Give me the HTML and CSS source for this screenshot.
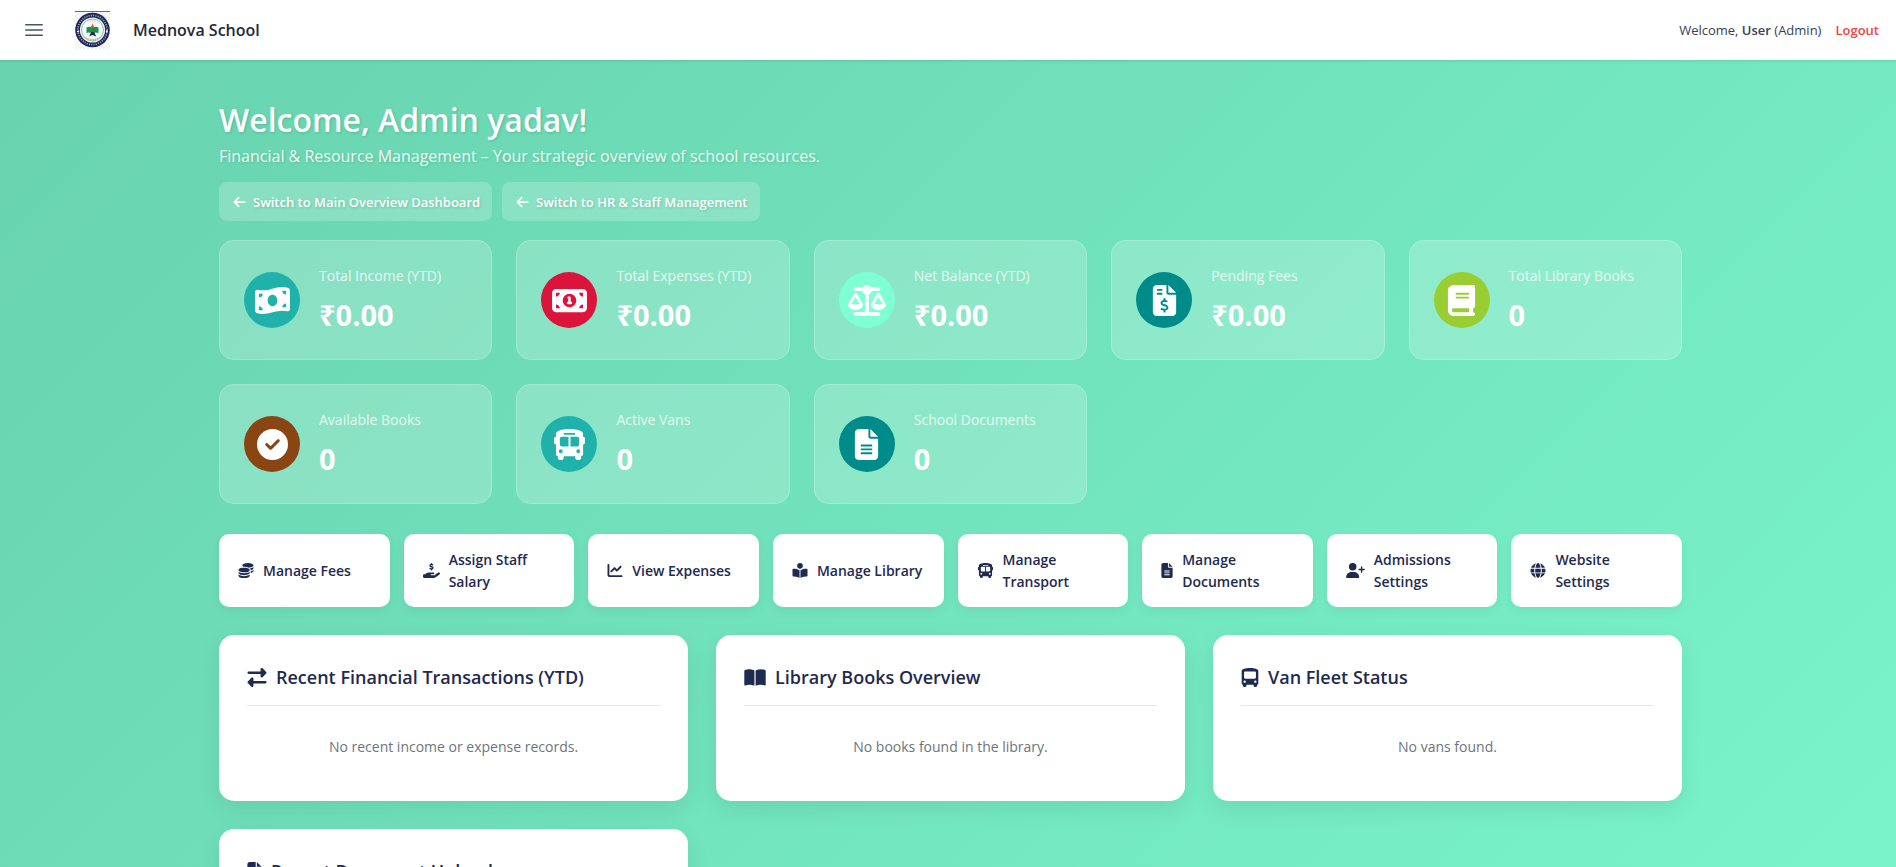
FILE: index.html
```html
<!DOCTYPE html>
<html lang="en">
<head>
<meta charset="utf-8">
<meta name="viewport" content="width=device-width, initial-scale=1">
<title>Mednova School</title>
<link rel="stylesheet" href="styles.css">
</head>
<body>
<svg class="sprite" aria-hidden="true">
  <symbol id="arrow-left" viewBox="0 0 448 512"><path d="M9.4 233.4c-12.5 12.5-12.5 32.8 0 45.3l160 160c12.5 12.5 32.8 12.5 45.3 0s12.5-32.8 0-45.3L109.2 288 416 288c17.7 0 32-14.3 32-32s-14.3-32-32-32l-306.7 0L214.6 118.6c12.5-12.5 12.5-32.8 0-45.3s-32.8-12.5-45.3 0l-160 160z"/></symbol>
  <symbol id="bill-wave" viewBox="0 0 576 512"><path fill-rule="evenodd" d="M0 112.5V422.3c0 18 10.1 35 27 41.3c87 32.5 174 10.3 261-11.9c79.8-20.3 159.6-40.7 239.3-18.9c23 6.3 48.7-9.5 48.7-33.4V89.7c0-18-10.1-35-27-41.3C462 15.9 375 38.1 288 60.3C208.2 80.6 128.4 100.9 48.7 79.1C25.6 72.8 0 88.6 0 112.5zM288 352c-44.2 0-80-43-80-96s35.8-96 80-96s80 43 80 96s-35.8 96-80 96zM64 352c35.3 0 64 28.7 64 64H64V352zm64-208c0 35.3-28.7 64-64 64V144h64zM512 304v64H448c0-35.3 28.7-64 64-64zM448 96h64v64c-35.3 0-64-28.7-64-64z"/></symbol>
  <symbol id="bill" viewBox="0 0 576 512"><path fill-rule="evenodd" d="M64 64C28.7 64 0 92.7 0 128V384c0 35.3 28.7 64 64 64H512c35.3 0 64-28.7 64-64V128c0-35.3-28.7-64-64-64H64zm64 320H64V320c35.3 0 64 28.7 64 64zM64 192V128h64c0 35.3-28.7 64-64 64zM448 384c0-35.3 28.7-64 64-64v64H448zm64-192c-35.3 0-64-28.7-64-64h64v64zM176 256a112 112 0 1 1 224 0 112 112 0 1 1 -224 0zm76-48c0 9.7 6.9 17.7 16 19.6V276h-4c-11 0-20 9-20 20s9 20 20 20h24 24c11 0 20-9 20-20s-9-20-20-20h-4V208c0-11-9-20-20-20H272c-11 0-20 9-20 20z"/></symbol>
  <symbol id="scale" viewBox="0 0 640 512"><path d="M384 32H512c17.7 0 32 14.3 32 32s-14.3 32-32 32H398.4c-5.2 25.8-22.9 47.1-46.4 57.3V448H512c17.7 0 32 14.3 32 32s-14.3 32-32 32H320 128c-17.7 0-32-14.3-32-32s14.3-32 32-32H288V153.3c-23.5-10.3-41.2-31.6-46.4-57.3H128c-17.7 0-32-14.3-32-32s14.3-32 32-32H256c14.6-19.4 37.8-32 64-32s49.4 12.6 64 32zm55.6 288H584.4L512 195.8 439.6 320zM512 416c-62.9 0-115.2-34-126-78.9c-2.6-11 1-22.3 6.7-32.1l95.2-163.2c5-8.6 14.2-13.8 24.1-13.8s19.1 5.3 24.1 13.8l95.2 163.2c5.7 9.8 9.3 21.1 6.7 32.1C627.2 382 574.9 416 512 416zM126.8 195.8L54.4 320H199.3L126.8 195.8zM.9 337.1c-2.6-11 1-22.3 6.7-32.1l95.2-163.2c5-8.6 14.2-13.8 24.1-13.8s19.1 5.3 24.1 13.8l95.2 163.2c5.7 9.8 9.3 21.1 6.7 32.1C242 382 189.7 416 126.8 416S11.7 382 .9 337.1z"/></symbol>
  <symbol id="invoice" viewBox="0 0 384 512"><path fill-rule="evenodd" d="M64 0C28.7 0 0 28.7 0 64V448c0 35.3 28.7 64 64 64H320c35.3 0 64-28.7 64-64V160H256c-17.7 0-32-14.3-32-32V0H64zM256 0V128H384L256 0zM64 80c0-8.8 7.2-16 16-16h64c8.8 0 16 7.2 16 16s-7.2 16-16 16H80c-8.8 0-16-7.2-16-16zm0 64c0-8.8 7.2-16 16-16h64c8.8 0 16 7.2 16 16s-7.2 16-16 16H80c-8.8 0-16-7.2-16-16zm128 72c8.8 0 16 7.2 16 16v17.3c8.5 1.2 16.7 3.1 24.1 5.1c8.5 2.3 13.6 11 11.3 19.6s-11 13.6-19.6 11.3c-11.1-3-22-5.2-32.1-5.3c-8.4-.1-17.4 1.8-23.6 5.5c-5.7 3.4-8.1 7.3-8.1 12.8c0 3.7 1.3 6.5 7.3 10.1c6.9 4.1 16.6 7.1 29.2 10.9l.5 .1c11.3 3.4 25.3 7.6 36.3 14.6c12.1 7.6 22.4 19.7 22.7 38.2c.3 19.3-9.6 33.3-22.9 41.6c-7.7 4.8-16.4 7.6-25.1 9.1V440c0 8.8-7.2 16-16 16s-16-7.2-16-16V422.2c-11.2-2.1-21.7-5.7-30.9-8.9c-2.1-.7-4.2-1.4-6.2-2.1c-8.4-2.8-12.9-11.9-10.1-20.2s11.9-12.9 20.2-10.1c2.5 .8 4.8 1.6 7.1 2.4c13.6 4.6 24.6 8.4 36.3 8.7c9.1 .3 17.9-1.7 23.7-5.3c5.1-3.2 7.9-7.3 7.8-14c-.1-4.6-1.8-7.8-7.7-11.6c-6.8-4.3-16.5-7.4-29-11.2l-1.6-.5c-11-3.3-24.3-7.3-34.8-13.7c-12-7.2-22.6-18.9-22.7-37.3c-.1-19.4 10.8-32.8 23.8-40.5c7.5-4.4 15.8-7.2 24.1-8.7V232c0-8.8 7.2-16 16-16z"/></symbol>
  <symbol id="book" viewBox="0 0 448 512"><path fill-rule="evenodd" d="M96 0C43 0 0 43 0 96V416c0 53 43 96 96 96H384h32c17.7 0 32-14.3 32-32s-14.3-32-32-32V384c17.7 0 32-14.3 32-32V32c0-17.7-14.3-32-32-32H384 96zm0 384H352v64H96c-17.7 0-32-14.3-32-32s14.3-32 32-32zm32-240c0-8.8 7.2-16 16-16H336c8.8 0 16 7.2 16 16s-7.2 16-16 16H144c-8.8 0-16-7.2-16-16zm16 48H336c8.8 0 16 7.2 16 16s-7.2 16-16 16H144c-8.8 0-16-7.2-16-16s7.2-16 16-16z"/></symbol>
  <symbol id="check" viewBox="0 0 512 512"><path fill-rule="evenodd" d="M256 512A256 256 0 1 0 256 0a256 256 0 1 0 0 512zM369 209L241 337c-9.4 9.4-24.6 9.4-33.9 0l-64-64c-9.4-9.4-9.4-24.6 0-33.9s24.6-9.4 33.9 0l47 47L335 175c9.4-9.4 24.6-9.4 33.9 0s9.4 24.6 0 33.9z"/></symbol>
  <symbol id="bus" viewBox="0 0 576 512"><path fill-rule="evenodd" d="M288 0C422.4 0 512 35.2 512 80V96l0 32c17.7 0 32 14.3 32 32v64c0 17.7-14.3 32-32 32l0 160c0 17.7-14.3 32-32 32v32c0 17.7-14.3 32-32 32H416c-17.7 0-32-14.3-32-32V448H192v32c0 17.7-14.3 32-32 32H128c-17.7 0-32-14.3-32-32l0-32c-17.7 0-32-14.3-32-32l0-160c-17.7 0-32-14.3-32-32V160c0-17.7 14.3-32 32-32h0V96h0V80C64 35.2 153.6 0 288 0zM128 160v96c0 17.7 14.3 32 32 32H272V128H160c-17.7 0-32 14.3-32 32zM304 288H416c17.7 0 32-14.3 32-32V160c0-17.7-14.3-32-32-32H304V288zM144 400a32 32 0 1 0 0-64 32 32 0 1 0 0 64zm288 0a32 32 0 1 0 0-64 32 32 0 1 0 0 64zM384 80c0-8.8-7.2-16-16-16H208c-8.8 0-16 7.2-16 16s7.2 16 16 16H368c8.8 0 16-7.2 16-16z"/></symbol>
  <symbol id="bus-simple" viewBox="0 0 448 512"><path fill-rule="evenodd" d="M224 0C348.8 0 448 35.2 448 80V96 416c0 17.7-14.3 32-32 32v32c0 17.7-14.3 32-32 32H352c-17.7 0-32-14.3-32-32V448H128v32c0 17.7-14.3 32-32 32H64c-17.7 0-32-14.3-32-32l0-32c-17.7 0-32-14.3-32-32V96 80C0 35.2 99.2 0 224 0zM64 128V256c0 17.7 14.3 32 32 32H352c17.7 0 32-14.3 32-32V128c0-17.7-14.3-32-32-32H96c-17.7 0-32 14.3-32 32zM80 400a32 32 0 1 0 0-64 32 32 0 1 0 0 64zm288 0a32 32 0 1 0 0-64 32 32 0 1 0 0 64z"/></symbol>
  <symbol id="file" viewBox="0 0 384 512"><path fill-rule="evenodd" d="M64 0C28.7 0 0 28.7 0 64V448c0 35.3 28.7 64 64 64H320c35.3 0 64-28.7 64-64V160H256c-17.7 0-32-14.3-32-32V0H64zM256 0V128H384L256 0zM112 256H272c8.8 0 16 7.2 16 16s-7.2 16-16 16H112c-8.8 0-16-7.2-16-16s7.2-16 16-16zm0 64H272c8.8 0 16 7.2 16 16s-7.2 16-16 16H112c-8.8 0-16-7.2-16-16s7.2-16 16-16zm0 64H272c8.8 0 16 7.2 16 16s-7.2 16-16 16H112c-8.8 0-16-7.2-16-16s7.2-16 16-16z"/></symbol>
  <symbol id="coins" viewBox="0 0 512 512"><path d="M512 80c0 18-14.3 34.6-38.4 48c-29.1 16.1-72.5 27.5-122.3 30.9c-3.7-1.8-7.4-3.5-11.3-5C300.6 137.4 248.2 128 192 128c-8.3 0-16.4 .2-24.5 .6l-1.1-.6C142.3 114.6 128 98 128 80c0-44.2 86-80 192-80S512 35.8 512 80zM160.7 161.1c10.2-.7 20.7-1.1 31.3-1.1c62.2 0 117.4 12.3 152.5 31.4C369.3 204.9 384 221.7 384 240c0 4-.7 7.9-2.1 11.7c-4.6 13.2-17 25.3-35 35.5c-.5 .3-1 .5-1.3 .7c-35 19.4-90.8 32-153.6 32c-59.6 0-112.9-11.3-148.2-29.1c-1.9-.9-3.7-1.9-5.5-2.9C14.3 274.6 0 258 0 240c0-34.8 53.4-64.5 128-75.4c10.5-1.5 21.4-2.7 32.7-3.5zM416 240c0-21.9-10.6-39.9-24.1-53.4c28.3-4.4 54.2-11.4 76.2-20.5c16.3-6.8 31.5-15.2 43.9-25.5V176c0 19.3-16.5 37.1-43.8 50.9c-14.6 7.4-32.4 13.7-52.4 18.5c.1-1.8 .2-3.5 .2-5.3zm-32 96c0 18-14.3 34.6-38.4 48c-1.8 1-3.6 1.9-5.5 2.9C304.9 404.7 251.6 416 192 416c-62.8 0-118.6-12.6-153.6-32C14.3 370.6 0 354 0 336V300.6c12.5 10.3 27.6 18.7 43.9 25.5C83.4 342.6 135.8 352 192 352s108.6-9.4 148.1-25.9c7.8-3.2 15.3-6.9 22.4-10.9c6.1-3.4 11.8-7.2 17.2-11.2c1.5-1.1 2.9-2.3 4.3-3.4V304v5.7V336zm32 0V304 278.1c19-4.2 36.5-9.5 52.1-16c16.3-6.8 31.5-15.2 43.9-25.5V272c0 10.5-5 21-14.9 30.9c-16.3 16.3-45 29.7-81.3 38.4c.1-1.7 .2-3.5 .2-5.3zM192 448c56.2 0 108.6-9.4 148.1-25.9c16.3-6.8 31.5-15.2 43.9-25.5V432c0 44.2-86 80-192 80S0 476.2 0 432V396.6c12.5 10.3 27.6 18.7 43.9 25.5C83.4 438.6 135.8 448 192 448z"/></symbol>
  <symbol id="hand" viewBox="0 0 576 512"><path d="M312 24V34.5c6.4 1.2 12.6 2.7 18.2 4.2c12.8 3.4 20.4 16.6 17 29.4s-16.6 20.4-29.4 17c-10.9-2.9-21.1-4.9-30.2-5c-7.3-.1-14.7 1.7-19.4 4.4c-2.1 1.3-3.1 2.4-3.5 3c-.3 .5-.7 1.2-.7 2.8c0 .3 0 .5 0 .6c.2 .2 .9 1.2 3.3 2.6c5.8 3.5 14.4 6.2 27.4 10.1l.9 .3c11.1 3.3 25.9 7.8 37.9 15.3c13.7 8.6 26.1 22.9 26.4 44.9c.3 22.5-11.4 38.9-26.7 48.5c-6.7 4.1-13.9 7-21.3 8.8V232c0 13.3-10.7 24-24 24s-24-10.7-24-24V220.6c-9.5-2.3-18.2-5.3-25.6-7.8c-2.1-.7-4.1-1.4-6-2c-12.6-4.2-19.4-17.8-15.2-30.4s17.8-19.4 30.4-15.2c2.6 .9 5 1.7 7.3 2.5c13.6 4.6 23.4 7.9 33.9 8.3c8 .3 15.1-1.6 19.2-4.1c1.9-1.2 2.8-2.2 3.2-2.9c.4-.6 .9-1.8 .8-4.1l0-.2c0-1 0-2.1-4-4.6c-5.7-3.6-14.3-6.4-27.1-10.3l-1.9-.6c-10.8-3.2-25-7.5-36.4-14.4c-13.5-8.1-26.5-22-26.6-44.1c-.1-22.9 12.9-38.6 27.7-47.4c6.4-3.8 13.3-6.4 20.2-8.2V24c0-13.3 10.7-24 24-24s24 10.7 24 24zM568.2 336.3c13.1 17.8 9.3 42.8-8.5 55.9L433.1 485.5c-23.4 17.2-51.6 26.5-80.7 26.5H192 32c-17.7 0-32-14.3-32-32V416c0-17.7 14.3-32 32-32H68.8l44.9-36c22.7-18.2 50.9-28 80-28H272h16 64c17.7 0 32 14.3 32 32s-14.3 32-32 32H288 272c-8.8 0-16 7.2-16 16s7.2 16 16 16H392.6l119.7-88.2c17.8-13.1 42.8-9.3 55.9 8.5z"/></symbol>
  <symbol id="chart" viewBox="0 0 512 512"><path d="M64 64c0-17.7-14.3-32-32-32S0 46.3 0 64V400c0 44.2 35.8 80 80 80H480c17.7 0 32-14.3 32-32s-14.3-32-32-32H80c-8.8 0-16-7.2-16-16V64zm406.6 86.6c12.5-12.5 12.5-32.8 0-45.3s-32.8-12.5-45.3 0L320 210.7l-57.4-57.4c-12.5-12.5-32.8-12.5-45.3 0l-112 112c-12.5 12.5-12.5 32.8 0 45.3s32.8 12.5 45.3 0L240 221.3l57.4 57.4c12.5 12.5 32.8 12.5 45.3 0l128-128z"/></symbol>
  <symbol id="reader" viewBox="0 0 512 512"><path d="M160 96a96 96 0 1 1 192 0A96 96 0 1 1 160 96zm80 152V512l-48.4-24.2c-20.9-10.4-43.5-17-66.8-19.3l-96-9.6C12.5 457.2 0 443.5 0 427V224c0-17.7 14.3-32 32-32H62.3c63.6 0 125.6 19.6 177.7 56zm32 264V248c52.1-36.4 114.1-56 177.7-56H480c17.7 0 32 14.3 32 32V427c0 16.4-12.5 30.2-28.8 31.8l-96 9.6c-23.2 2.3-45.9 8.9-66.8 19.3L272 512z"/></symbol>
  <symbol id="user-plus" viewBox="0 0 640 512"><path d="M96 128a128 128 0 1 1 256 0A128 128 0 1 1 96 128zM0 482.3C0 383.8 79.8 304 178.3 304h91.4C368.2 304 448 383.8 448 482.3c0 16.4-13.3 29.7-29.7 29.7H29.7C13.3 512 0 498.7 0 482.3zM504 312V248H440c-13.3 0-24-10.7-24-24s10.7-24 24-24h64V136c0-13.3 10.7-24 24-24s24 10.7 24 24v64h64c13.3 0 24 10.7 24 24s-10.7 24-24 24H552v64c0 13.3-10.7 24-24 24s-24-10.7-24-24z"/></symbol>
  <symbol id="globe" viewBox="0 0 512 512"><path d="M352 256c0 22.2-1.2 43.6-3.3 64H163.3c-2.2-20.4-3.3-41.8-3.3-64s1.2-43.6 3.3-64H348.7c2.2 20.4 3.3 41.8 3.3 64zm28.8-64H503.9c5.3 20.5 8.1 41.9 8.1 64s-2.8 43.5-8.1 64H380.8c2.1-20.6 3.2-42 3.2-64s-1.1-43.4-3.2-64zm112.6-32H376.7c-10-63.9-29.8-117.4-55.3-151.6c78.3 20.7 142 77.5 171.9 151.6zm-149.1 0H167.7c6.1-36.4 15.5-68.6 27-94.7c10.5-23.6 22.2-40.7 33.5-51.5C239.4 3.2 248.7 0 256 0s16.6 3.2 27.8 13.8c11.3 10.8 23 27.9 33.5 51.5c11.6 26 20.9 58.2 27 94.7zm-209 0H18.6C48.6 85.9 112.2 29.1 190.6 8.4C165.1 42.6 145.3 96.1 135.3 160zM8.1 192H131.2c-2.1 20.6-3.2 42-3.2 64s1.1 43.4 3.2 64H8.1C2.8 299.5 0 278.1 0 256s2.8-43.5 8.1-64zM194.7 446.6c-11.6-26-20.9-58.2-27-94.6H344.3c-6.1 36.4-15.5 68.6-27 94.6c-10.5 23.6-22.2 40.7-33.5 51.5C272.6 508.8 263.3 512 256 512s-16.6-3.2-27.8-13.8c-11.3-10.8-23-27.9-33.5-51.5zM135.3 352c10 63.9 29.8 117.4 55.3 151.6C112.2 482.9 48.6 426.1 18.6 352H135.3zm358.1 0c-30 74.1-93.6 130.9-171.9 151.6c25.5-34.2 45.2-87.7 55.3-151.6H493.4z"/></symbol>
  <symbol id="exchange" viewBox="0 0 512 512"><path d="M32 96l320 0V32c0-12.9 7.8-24.6 19.8-29.6s25.7-2.2 34.9 6.9l96 96c6 6 9.4 14.1 9.4 22.6s-3.4 16.6-9.4 22.6l-96 96c-9.2 9.2-22.9 11.9-34.9 6.9s-19.8-16.6-19.8-29.6V160L32 160c-17.7 0-32-14.3-32-32s14.3-32 32-32zM480 352c17.7 0 32 14.3 32 32s-14.3 32-32 32H160v64c0 12.9-7.8 24.6-19.8 29.6s-25.7 2.2-34.9-6.9l-96-96c-6-6-9.4-14.1-9.4-22.6s3.4-16.6 9.4-22.6l96-96c9.2-9.2 22.9-11.9 34.9-6.9s19.8 16.6 19.8 29.6l0 64H480z"/></symbol>
  <symbol id="book-open" viewBox="0 0 576 512"><path d="M249.6 471.5c10.8 3.8 22.4-4.1 22.4-15.5V78.6c0-4.2-1.6-8.4-5-11C247.4 52 202.4 32 144 32C93.5 32 46.3 45.3 18.1 56.1C6.8 60.5 0 71.7 0 83.8V454.1c0 11.9 12.8 20.2 24.1 16.5C55.6 460.1 105.5 448 144 448c33.9 0 79 14 105.6 23.5zm76.8 0C353 462 398.1 448 432 448c38.5 0 88.4 12.1 119.9 22.6c11.3 3.8 24.1-4.6 24.1-16.5V83.8c0-12.1-6.8-23.3-18.1-27.6C529.7 45.3 482.5 32 432 32c-58.4 0-103.4 20-123 35.6c-3.3 2.6-5 6.8-5 11V456c0 11.4 11.7 19.3 22.4 15.5z"/></symbol>
</svg>

<header class="topbar">
  <div class="brand">
    <button class="menu-btn" type="button" aria-label="Toggle menu">
      <svg viewBox="0 0 24 24" fill="none" stroke="currentColor" stroke-width="1.5" stroke-linecap="round"><path d="M3.75 6.75h16.5M3.75 12h16.5M3.75 17.25h16.5"/></svg>
    </button>
    <svg class="logo" viewBox="0 0 35 38" role="img" aria-label="School logo">
      <defs><pattern id="checker" width="4" height="4" patternUnits="userSpaceOnUse"><path fill="#fff" d="M0 0h4v4H0z"/><path fill="#f0f0f0" d="M0 0h2v2H0zM2 2h2v2H2z"/></pattern></defs>
      <path fill="url(#checker)" d="M0 0h35v38H0z"/>
      <path fill="#77686b" d="M0 0h35v1H0z"/>
      <circle cx="17.5" cy="19" r="17.3" fill="#1f2757"/>
      <circle cx="17.5" cy="19" r="14.6" fill="none" stroke="#a9acc6" stroke-width="1.6" stroke-dasharray="1.1 1.2"/>
      <circle cx="17.5" cy="19" r="12.6" fill="#f5faf8"/>
      <circle cx="17.5" cy="19" r="11" fill="none" stroke="#7cc3a0" stroke-width="1"/>
      <circle cx="3.2" cy="20.5" r="1" fill="#fff"/><circle cx="31.8" cy="20.5" r="1" fill="#fff"/>
      <path fill="none" stroke="#e3a18d" stroke-width="1.4" stroke-dasharray="1.5 .7" d="M9 26q8.500 5 17 0"/>
      <path fill="none" stroke="#e7a39a" stroke-dasharray="1 1" d="M13.500 10h8"/>
      <path fill="#16924a" d="M11.500 16.500q3-1.500 6 0 3-1.500 6 0v5.500q-3-1-6 .5-3-1.500-6-.5z"/>
      <path fill="#df4b37" d="M17.500 12.500l1.300 3-1.300 2.500-1.300-2.500z"/>
      <path fill="#232a5a" d="M16.200 21h3l2 4.500-3.700-1.500-3.300 1.500z"/>
    </svg>
    <span class="brand-name">Mednova School</span>
  </div>
  <div class="account">
    <span>Welcome, <strong>User</strong> (Admin)</span>
    <a class="logout" href="#">Logout</a>
  </div>
</header>

<main class="page">
  <section class="hero">
    <h1>Welcome, Admin yadav!</h1>
    <p>Financial &amp; Resource Management – Your strategic overview of school resources.</p>
    <nav class="switches">
      <a class="switch" href="#"><svg class="icon"><use href="#arrow-left"/></svg>Switch to Main Overview Dashboard</a>
      <a class="switch" href="#"><svg class="icon"><use href="#arrow-left"/></svg>Switch to HR &amp; Staff Management</a>
    </nav>
  </section>

  <section class="stats">
    <article class="stat"><span class="badge teal"><svg class="w36"><use href="#bill-wave"/></svg></span><div><h2>Total Income (YTD)</h2><p>₹0.00</p></div></article>
    <article class="stat"><span class="badge crimson"><svg class="w36"><use href="#bill"/></svg></span><div><h2>Total Expenses (YTD)</h2><p>₹0.00</p></div></article>
    <article class="stat"><span class="badge aqua"><svg class="w40"><use href="#scale"/></svg></span><div><h2>Net Balance (YTD)</h2><p>₹0.00</p></div></article>
    <article class="stat"><span class="badge cyan"><svg><use href="#invoice"/></svg></span><div><h2>Pending Fees</h2><p>₹0.00</p></div></article>
    <article class="stat"><span class="badge lime"><svg><use href="#book"/></svg></span><div><h2>Total Library Books</h2><p>0</p></div></article>
    <article class="stat"><span class="badge brown"><svg><use href="#check"/></svg></span><div><h2>Available Books</h2><p>0</p></div></article>
    <article class="stat"><span class="badge teal"><svg class="w36"><use href="#bus"/></svg></span><div><h2>Active Vans</h2><p>0</p></div></article>
    <article class="stat"><span class="badge cyan"><svg><use href="#file"/></svg></span><div><h2>School Documents</h2><p>0</p></div></article>
  </section>

  <nav class="actions">
    <a href="#"><svg class="icon i16"><use href="#coins"/></svg>Manage Fees</a>
    <a href="#"><svg class="icon i18"><use href="#hand"/></svg>Assign Staff Salary</a>
    <a href="#"><svg class="icon i16"><use href="#chart"/></svg>View Expenses</a>
    <a href="#"><svg class="icon i16"><use href="#reader"/></svg>Manage Library</a>
    <a href="#"><svg class="icon i18"><use href="#bus"/></svg>Manage Transport</a>
    <a href="#"><svg class="icon i12"><use href="#file"/></svg>Manage Documents</a>
    <a href="#"><svg class="icon i20"><use href="#user-plus"/></svg>Admissions Settings</a>
    <a href="#"><svg class="icon i16"><use href="#globe"/></svg>Website Settings</a>
  </nav>

  <section class="panels">
    <article class="panel"><h2><svg class="p20"><use href="#exchange"/></svg>Recent Financial Transactions (YTD)</h2><p>No recent income or expense records.</p></article>
    <article class="panel"><h2><svg class="p22"><use href="#book-open"/></svg>Library Books Overview</h2><p>No books found in the library.</p></article>
    <article class="panel"><h2><svg class="p18"><use href="#bus-simple"/></svg>Van Fleet Status</h2><p>No vans found.</p></article>
    <article class="panel"><h2><svg class="p15"><use href="#file"/></svg>Recent Document Uploads</h2><p>No documents found.</p></article>
  </section>
</main>
</body>
</html>
```
FILE: styles.css
```css
* { box-sizing: border-box; margin: 0; }

body {
  min-height: 100vh;
  font-family: "Open Sans", "Noto Sans", sans-serif;
  font-size: 14px;
  line-height: 22px;
  color: #1e2a4f;
  background: linear-gradient(135deg, #66cdaa -12%, #7fffd4 125%);
}

a { color: inherit; text-decoration: none; }
svg { display: block; fill: currentColor; flex: none; }
.sprite { display: none; }

.topbar {
  display: flex;
  align-items: center;
  justify-content: space-between;
  height: 60px;
  padding: 0 17px 0 22px;
  background: #fff;
  box-shadow: 0 1px 3px rgba(0, 0, 0, .12);
}
.brand { display: flex; align-items: center; }
.menu-btn {
  padding: 0;
  border: 0;
  background: none;
  color: #475569;
}
.menu-btn svg { width: 24px; height: 24px; fill: none; }
.logo { width: 35px; height: 38px; margin: 0 23px 0 29px; }
.brand-name { font-size: 16px; font-weight: 600; color: #1f2937; }
.account {
  display: flex;
  gap: 14px;
  font-size: 13px;
  color: #374151;
}
.account strong { font-weight: 600; }
.logout { font-weight: 600; color: #ef4444; }

.page {
  max-width: 1468px;
  margin: 0 auto;
  padding: 38px 0 40px 5px;
}

.hero { color: #fff; text-shadow: 1px 1px 3px rgba(0, 0, 0, .15); }
.hero h1 {
  font-size: 32px;
  font-weight: 600;
  line-height: 44px;
}
.hero > p {
  font-size: 16px;
  line-height: 28px;
  opacity: .9;
}
.switches { display: flex; gap: 10px; margin-top: 12px; }
.switch {
  display: flex;
  align-items: center;
  gap: 7px;
  height: 39px;
  padding: 0 12px 0 14px;
  border-radius: 8px;
  background: rgba(255, 255, 255, .2);
  font-size: 13px;
  font-weight: 600;
}
.switch .icon { width: 13px; height: 14px; }

.stats {
  display: grid;
  grid-template-columns: repeat(5, 1fr);
  gap: 24px;
  margin-top: 19px;
}
.stat {
  display: flex;
  align-items: center;
  gap: 19px;
  min-height: 120px;
  padding: 0 24px;
  border: 1px solid rgba(255, 255, 255, .2);
  border-radius: 15px;
  background: rgba(255, 255, 255, .2);
  color: #fff;
}
.stat h2 {
  font-size: 14px;
  font-weight: 400;
  line-height: 24px;
  opacity: .8;
}
.stat p {
  margin-top: 6px;
  font-size: 29px;
  font-weight: 700;
  line-height: 42px;
}
.badge {
  display: flex;
  align-items: center;
  justify-content: center;
  flex: none;
  width: 56px;
  height: 56px;
  border-radius: 50%;
}
.badge svg { width: 31px; height: 31px; }
.badge .w36 { width: 35px; }
.badge .w40 { width: 38px; }
.teal { background: #20b2aa; }
.crimson { background: #dc143c; }
.aqua { background: #7fffd4; }
.cyan { background: #008b8b; }
.lime { background: #9acd32; }
.brown { background: #8b4513; }

.actions {
  display: grid;
  grid-template-columns: repeat(8, 1fr);
  gap: 14px;
  margin-top: 30px;
}
.actions a {
  display: flex;
  align-items: center;
  gap: 9px;
  min-height: 73px;
  padding: 0 18px 0 19px;
  border-radius: 10px;
  background: #fff;
  box-shadow: 0 4px 12px rgba(0, 0, 0, .05);
  font-weight: 600;
}
.actions .icon { height: 15px; }
.i12 { width: 12px; }
.i16 { width: 16px; }
.i18 { width: 17px; }
.i20 { width: 19px; }

.panels {
  display: grid;
  grid-template-columns: repeat(3, 1fr);
  gap: 28px;
  margin-top: 28px;
}
.panel {
  padding: 28px;
  border-radius: 15px;
  background: #fff;
  box-shadow: 0 8px 25px rgba(0, 0, 0, .08);
}
.panel h2 {
  display: flex;
  align-items: center;
  gap: 9px;
  padding-bottom: 14px;
  border-bottom: 1px solid #e2e8f0;
  font-size: 18px;
  font-weight: 600;
  line-height: 28px;
}
.panel h2 svg { height: 19px; }
.p15 { width: 15px; }
.p18 { width: 18px; }
.p20 { width: 20px; }
.p22 { width: 22px; }
.panel p {
  padding: 30px 0 15px;
  text-align: center;
  color: #6c757d;
}
```
